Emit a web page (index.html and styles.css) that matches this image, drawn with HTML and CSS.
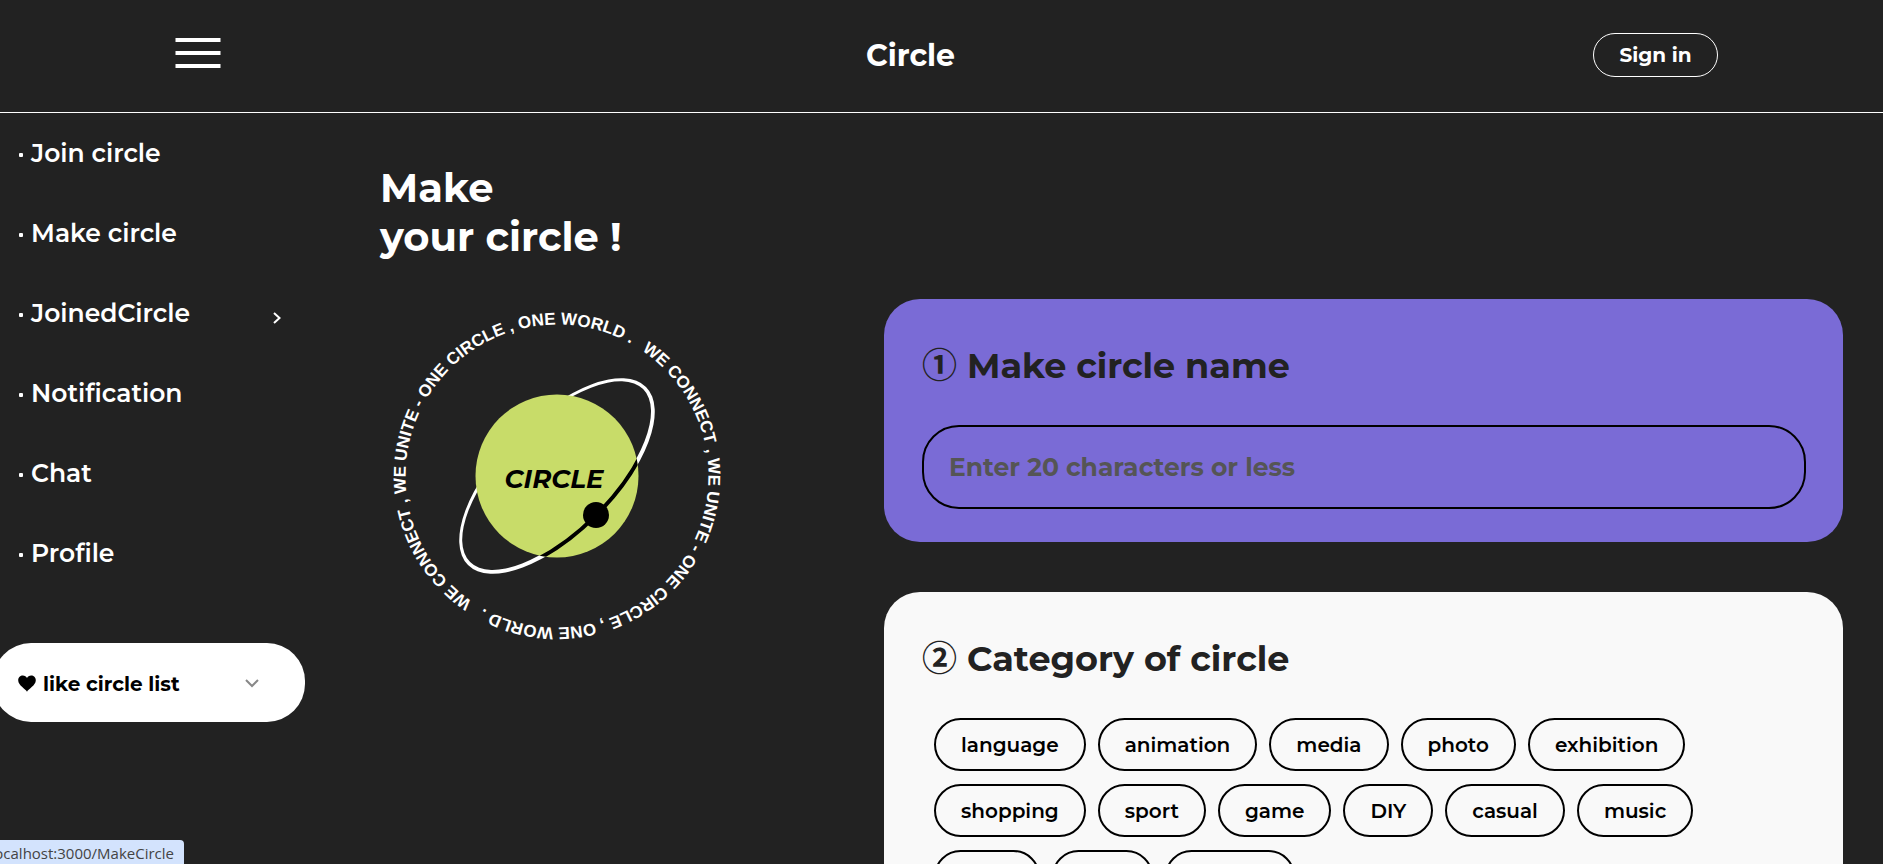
FILE: index.html
```
<!DOCTYPE html>
<html lang="en">
<head>
<meta charset="utf-8">
<title>Circle</title>
<link rel="stylesheet" href="styles.css">
</head>
<body>
<div class="page">
  <header class="header">
    <button class="menu-button" type="button" aria-label="Menu">
      <svg width="46" height="30" viewBox="0 0 46 30" fill="#fff"><path d="M0.500 0h45v4h-45zM0.500 13h45v4h-45zM0.500 26h45v4h-45z"/></svg>
    </button>
    <h1 class="brand">Circle</h1>
    <button class="sign-in" type="button">Sign in</button>
  </header>
  <div class="body">
    <aside class="sidebar">
      <nav class="nav">
        <a class="nav-link" href="#"><span class="dot"></span>Join circle</a>
        <a class="nav-link" href="#"><span class="dot"></span>Make circle</a>
        <a class="nav-link" href="#"><span class="dot"></span>JoinedCircle
          <svg class="nav-arrow" width="10" height="12" viewBox="0 0 10 12" fill="none" stroke="#fff" stroke-width="2"><path d="M2 1l5.500 5-5.500 5"/></svg>
        </a>
        <a class="nav-link" href="#"><span class="dot"></span>Notification</a>
        <a class="nav-link" href="#"><span class="dot"></span>Chat</a>
        <a class="nav-link" href="#"><span class="dot"></span>Profile</a>
      </nav>
      <button class="likes" type="button">
        <svg width="18" height="17" viewBox="0 0 18 17"><path d="M9 16.800C7.500 13.500 0.200 10.500 0.200 5.200 0.200 2.300 2.400 0.400 4.800 0.400 6.800 0.400 8.300 1.500 9 3 9.700 1.500 11.200 0.400 13.200 0.400 15.600 0.400 17.800 2.300 17.800 5.200 17.800 10.500 10.500 13.500 9 16.800z"/></svg>
        <span>like circle list</span>
        <svg class="likes-arrow" width="14" height="10" viewBox="0 0 14 10" fill="none" stroke="#888" stroke-width="2"><path d="M1 1L7 7 13 1"/></svg>
      </button>
    </aside>
    <main class="content">
      <section class="hero">
        <h2 class="headline">Make<br>your circle !</h2>
        <svg class="logo" viewBox="-165 -165 330 330">
          <defs>
            <path id="ring" d="M84.700-125.600A1 1 0 0 1-84.700 125.600A1 1 0 0 1 84.700-125.600"/>
            <path id="ring-back" d="M-84.700 125.600A1 1 0 0 1 84.700-125.600A1 1 0 0 1-84.700 125.600"/>
            <clipPath id="disc"><circle r="81.500"/></clipPath>
          </defs>
          <text class="ring-text"><textPath href="#ring">WE CONNECT , WE UNITE - ONE CIRCLE , ONE WORLD .</textPath></text>
          <text class="ring-text"><textPath href="#ring-back">WE CONNECT , WE UNITE - ONE CIRCLE , ONE WORLD .</textPath></text>
          <path fill="#fff" fill-rule="evenodd" d="M89-89A120 54.600 -45 0 1-89 89A120 54.600 -45 0 1 89-89zM86.100-86.900A120 52.500 -45 0 1-86.900 86.100A120 52.500 -45 0 1 86.100-86.900z"/>
          <circle r="81.500" fill="#c8dc69"/>
          <g clip-path="url(#disc)"><path fill="none" stroke="#000" stroke-width="3.900" d="M87.700-87.700A120 53.700 -45 0 1-87.700 87.700"/></g>
          <circle cx="39" cy="39" r="13"/>
          <text class="logo-name" x="-3" y="12" text-anchor="middle">CIRCLE</text>
        </svg>
      </section>
      <form class="cards">
        <section class="card card-name">
          <h2 class="card-title"><span class="number">①</span><label for="circle-name">Make circle name</label></h2>
          <input class="name-input" id="circle-name" type="text" maxlength="20" placeholder="Enter 20 characters or less">
        </section>
        <section class="card card-category">
          <h2 class="card-title"><span class="number">②</span>Category of circle</h2>
          <div class="chips">
            <button class="chip" type="button">language</button>
            <button class="chip" type="button">animation</button>
            <button class="chip" type="button">media</button>
            <button class="chip" type="button">photo</button>
            <button class="chip" type="button">exhibition</button>
            <button class="chip" type="button">shopping</button>
            <button class="chip" type="button">sport</button>
            <button class="chip" type="button">game</button>
            <button class="chip" type="button">DIY</button>
            <button class="chip" type="button">casual</button>
            <button class="chip" type="button">music</button>
            <button class="chip" type="button">book</button>
            <button class="chip" type="button">food</button>
            <button class="chip" type="button">fashion</button>
          </div>
        </section>
      </form>
    </main>
  </div>
  <div class="status"><span class="status-text">localhost:3000/MakeCircle</span></div>
</div>
</body>
</html>
```
FILE: styles.css
```
* { box-sizing: border-box; }
body {
  margin: 0;
  background: #222;
  color: #fff;
  font-family: Montserrat, Inter, sans-serif;
}
button, input { font-family: inherit; }
button { cursor: pointer; }
h1, h2 { margin: 0; }
.page {
  position: relative;
  height: 100vh;
  overflow: hidden;
}
.header {
  display: flex;
  align-items: center;
  justify-content: space-between;
  height: 113px;
  padding: 0 165px 2px 175px;
  border-bottom: 1px solid #fff;
}
.menu-button {
  padding: 0 0 4px;
  border: 0;
  background: none;
}
.menu-button svg, .logo { display: block; }
.brand { font-size: 30px; font-weight: 700; padding-left: 7px; }
.sign-in {
  width: 125px;
  height: 44px;
  border: 1px solid #fff;
  border-radius: 22px;
  background: none;
  color: #fff;
  font-size: 20px;
  font-weight: 700;
}
.body { display: flex; }
.sidebar {
  flex: none;
  width: 320px;
}
.nav { display: flex; flex-direction: column; }
.nav-link {
  display: flex;
  align-items: center;
  height: 80px;
  padding: 0 38px 0 18px;
  color: #fff;
  font-size: 25px;
  font-weight: 600;
  text-decoration: none;
}
.dot {
  width: 4px;
  height: 4px;
  margin: 4px 8px 0 1px;
  border-radius: 1px;
  background: #fff;
}
.nav-arrow { margin: 10px 0 0 auto; }
.likes {
  display: flex;
  align-items: center;
  gap: 7px;
  width: 312px;
  height: 79px;
  margin: 50px 0 0 -7px;
  padding: 2px 46px 0 25px;
  border: 0;
  border-radius: 38px;
  background: #fff;
  color: #000;
  font-size: 20px;
  font-weight: 700;
}
.likes-arrow { margin-left: auto; }
.content {
  flex: 1;
  display: grid;
  grid-template-columns: 504fr 959fr;
  padding: 0 40px 0 60px;
}
.hero { padding-top: 50px; }
.headline {
  font-size: 40px;
  font-weight: 700;
  line-height: 49px;
}
.logo {
  width: 330px;
  margin: 50px 0 0 12px;
}
.ring-text {
  fill: #fff;
  font: 700 17px "Liberation Sans", sans-serif;
}
.logo-name {
  font-size: 26px;
  font-style: italic;
  font-weight: 700;
}
.cards {
  display: flex;
  flex-direction: column;
  gap: 50px;
  padding-top: 186px;
}
.card {
  padding: 38px 37px 33px 38px;
  border-radius: 36px;
  color: #222;
}
.card-name { background: #7a6bd6; }
.card-category { background: #f9f9f9; }
.card-title {
  display: flex;
  align-items: center;
  gap: 10px;
  height: 56px;
  font-size: 35px;
  font-weight: 700;
}
.number {
  font-family: "Noto Sans CJK KR", sans-serif;
  line-height: 52px;
  padding-bottom: 4px;
}
.name-input {
  display: block;
  width: 100%;
  height: 84px;
  margin-top: 32px;
  padding: 0 25px;
  border: 2px solid #000;
  border-radius: 37px;
  background: none;
  color: #000;
  font-size: 25px;
  font-weight: 700;
}
.name-input::placeholder { color: #555; opacity: 1; }
.chips {
  display: flex;
  flex-wrap: wrap;
  gap: 13px 12px;
  margin-top: 32px;
  padding: 0 80px 0 12px;
}
.chip {
  height: 53px;
  padding: 0 25px;
  border: 2px solid #000;
  border-radius: 27px;
  background: none;
  color: #000;
  font-size: 20px;
  font-weight: 600;
}
.status {
  position: absolute;
  left: 0;
  bottom: 0;
  display: flex;
  justify-content: flex-end;
  width: 184px;
  height: 24px;
  padding-right: 10px;
  overflow: hidden;
  border-radius: 0 4px 0 0;
  background: #d3e3fd;
  color: #444;
  font: 15px/26px "Open Sans", sans-serif;
}
```
